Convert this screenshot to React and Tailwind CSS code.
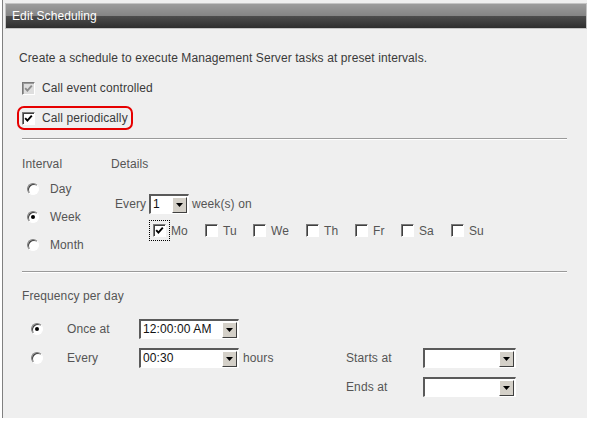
import React from "react";

function Check({ checked, disabled }) {
  return (
    <span
      className={`flex h-[13px] w-[13px] shrink-0 items-center justify-center border border-t-[#7a7a7a] border-l-[#7a7a7a] border-r-white border-b-white ${
        disabled ? "bg-[#dedede] shadow-[inset_1px_1px_0_#9a9a9a]" : "bg-white shadow-[inset_1px_1px_0_#404040]"
      }`}
    >
      {checked && (
        <svg width="9" height="9" viewBox="0 0 9 9">
          <path
            d="M1.2 4.2 L3.4 6.6 L7.8 1.6"
            stroke={disabled ? "#8c8c8c" : "#000"}
            strokeWidth="1.9"
            fill="none"
          />
        </svg>
      )}
    </span>
  );
}

function Radio({ checked }) {
  return (
    <span className="relative flex h-[12px] w-[12px] shrink-0 items-center justify-center rounded-full border border-t-[#808080] border-l-[#808080] border-r-white border-b-white bg-white shadow-[inset_1px_1px_0_#404040]">
      {checked && <span className="h-[4px] w-[4px] rounded-full bg-black" />}
    </span>
  );
}

function Select({ className, value }) {
  return (
    <div
      className={`flex h-[20px] shrink-0 border-t-2 border-l-2 border-b border-r border-t-[#5a5a5a] border-l-[#5a5a5a] border-b-white border-r-white bg-white ${className}`}
    >
      <div className="flex-1 overflow-hidden pl-[2px] leading-[17px] text-[#111]">{value}</div>
      <div className="mr-[1px] mt-px flex h-[16px] w-[15px] items-center justify-center border border-t-white border-l-white border-b-[#404040] border-r-[#404040] bg-[#d4d0c8]">
        <svg width="7" height="4" viewBox="0 0 7 4">
          <path d="M0 0 H7 L3.5 4 Z" fill="#000" />
        </svg>
      </div>
    </div>
  );
}

function Day({ label, w, focus, checked }) {
  return (
    <div className={`flex items-center ${w}`}>
      {focus ? (
        <span className="border border-dotted border-black p-[3px]">
          <Check checked={checked} />
        </span>
      ) : (
        <Check checked={checked} />
      )}
      <span className={`${focus ? "ml-[1px]" : "ml-[5px]"} text-[#555]`}>{label}</span>
    </div>
  );
}

function Sep({ className }) {
  return <div className={`ml-[19px] h-[2px] w-[545px] border-t border-b border-t-[#9a9a9a] border-b-white ${className}`} />;
}

export default function App() {
  return (
    <div className="h-[422px] w-[589px] bg-white font-['Liberation_Sans',Arial,sans-serif] text-[12px] leading-[16px] tracking-[0.1px]">
      <div className="ml-[2px] h-[418px] w-[585px] border-l border-[#808080] bg-[#efefef] pt-[3px]">
        <div className="ml-[2px] flex h-[26px] w-[582px] items-center border border-[#c4c4c4] bg-[linear-gradient(#9c9c9c,#858585_48%,#4c4c4c_52%,#2e2e2e)] pl-[6px] text-white">
          Edit Scheduling
        </div>

        <div className="ml-[16px] mt-[21px] h-[16px] text-[#3a3a3a]">
          Create a schedule to execute Management Server tasks at preset intervals.
        </div>

        <div className="ml-[19px] mt-[14px] flex h-[16px] items-center text-[#3a3a3a]">
          <Check checked disabled />
          <span className="ml-[7px]">Call event controlled</span>
        </div>

        <div className="ml-[14px] mt-[10px] flex h-[24px] w-[116px] items-center rounded-[7px] border-2 border-[#e60000] pl-[3px] text-[#3a3a3a]">
          <Check checked />
          <span className="ml-[7px]">Call periodically</span>
        </div>

        <Sep className="mt-[8px]" />

        <div className="ml-[19px] mt-[16px] flex text-[#555]">
          <div className="w-[89px]">
            <div className="h-[16px]">Interval</div>
            <div className="mt-[9px] flex h-[16px] items-center">
              <span className="ml-[5px]"><Radio /></span>
              <span className="ml-[11px]">Day</span>
            </div>
            <div className="mt-[12px] flex h-[16px] items-center">
              <span className="ml-[5px]"><Radio checked /></span>
              <span className="ml-[11px]">Week</span>
            </div>
            <div className="mt-[12px] flex h-[16px] items-center">
              <span className="ml-[5px]"><Radio /></span>
              <span className="ml-[11px]">Month</span>
            </div>
          </div>
          <div>
            <div className="h-[16px]">Details</div>
            <div className="mt-[22px] flex h-[20px] items-center">
              <span className="ml-[4px] w-[34px]">Every</span>
              <Select className="w-[40px]" value="1" />
              <span className="ml-[3px]">week(s) on</span>
            </div>
            <div className="ml-[38px] mt-[6px] flex items-center">
              <Day label="Mo" w="w-[56px]" focus checked />
              <Day label="Tu" w="w-[48px]" />
              <Day label="We" w="w-[53px]" />
              <Day label="Th" w="w-[49px]" />
              <Day label="Fr" w="w-[46px]" />
              <Day label="Sa" w="w-[50px]" />
              <Day label="Su" w="w-[40px]" />
            </div>
          </div>
        </div>

        <Sep className="mt-[18px]" />

        <div className="ml-[19px] mt-[15px] h-[16px] text-[#555]">Frequency per day</div>

        <div className="ml-[28px] mt-[15px] flex h-[20px] items-center text-[#555]">
          <Radio checked />
          <span className="ml-[24px] w-[72px]">Once at</span>
          <Select className="w-[100px]" value="12:00:00 AM" />
        </div>

        <div className="ml-[28px] mt-[9px] flex h-[20px] items-center text-[#555]">
          <Radio />
          <span className="ml-[24px] w-[72px]">Every</span>
          <Select className="w-[100px]" value="00:30" />
          <span className="ml-[4px] w-[103px]">hours</span>
          <span className="w-[77px]">Starts at</span>
          <Select className="w-[93px]" value="" />
        </div>

        <div className="ml-[343px] mt-[9px] flex h-[20px] items-center text-[#555]">
          <span className="w-[77px]">Ends at</span>
          <Select className="w-[93px]" value="" />
        </div>
      </div>
    </div>
  );
}
